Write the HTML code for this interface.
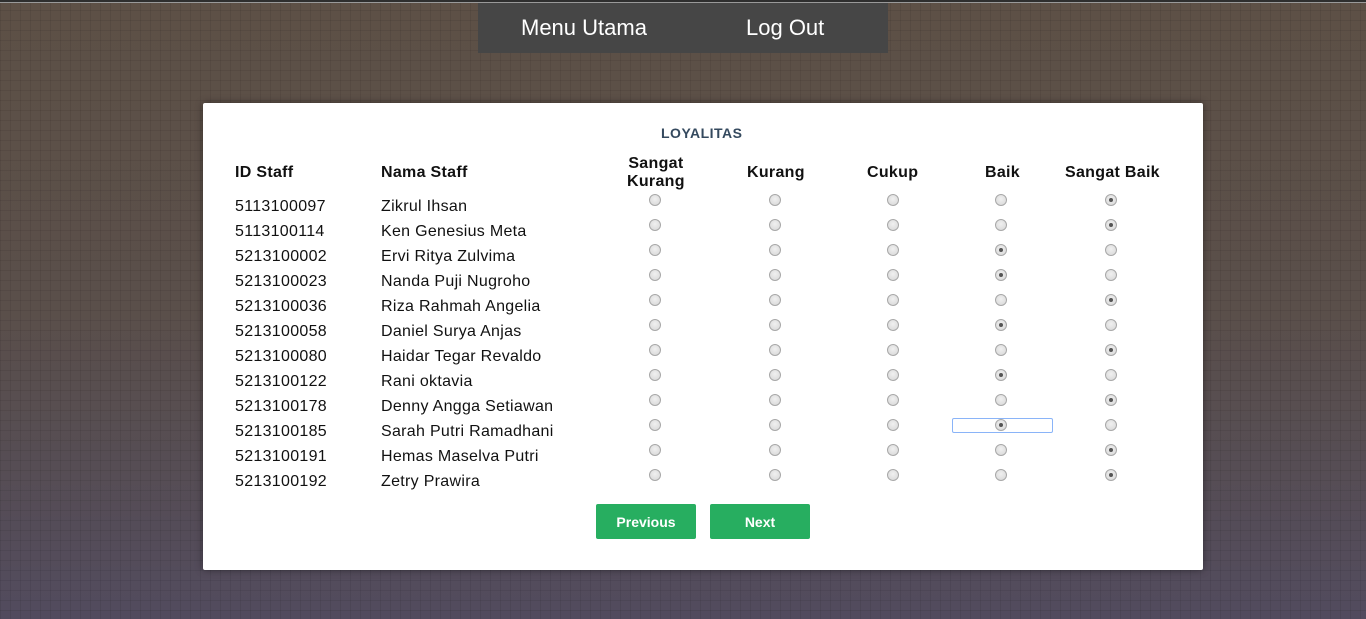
<!DOCTYPE html>
<html><head><meta charset="utf-8"><style>
*{margin:0;padding:0;box-sizing:border-box}
body{width:1366px;height:619px;overflow:hidden;position:relative;font-family:"Liberation Sans",sans-serif;
background:linear-gradient(#5d5046 0%,#5a4f4a 50%,#524b5e 100%);}
.grid{position:absolute;inset:0;background-image:linear-gradient(rgba(0,0,0,.07) 1px,transparent 1px),linear-gradient(90deg,rgba(0,0,0,.07) 1px,transparent 1px);background-size:10px 10px}
.topline{position:absolute;left:0;top:0;width:1366px;height:3px;background:#2e2e2e;border-bottom:1px solid #999}
.nav{position:absolute;left:478px;top:3px;width:410px;height:50px;background:#464646;color:#fff;font-size:22px}
.nav span{position:absolute;top:12px}
.card{position:absolute;left:203px;top:103px;width:1000px;height:467px;background:#fff;border-radius:2px;box-shadow:0 0 8px rgba(0,0,0,.4)}
.t{position:absolute;color:#111;font-size:16px;letter-spacing:.3px;white-space:nowrap}
.h{font-weight:bold}
.r{position:absolute;width:12px;height:12px;border-radius:50%;border:1px solid #a8a8a8;background:radial-gradient(circle at 50% 40%,#f0f0f0,#d6d6d6)}
.r.c::after{content:"";position:absolute;left:3px;top:3px;width:4px;height:4px;border-radius:50%;background:#555}
.btn{position:absolute;top:401px;width:100px;height:35px;background:#27ae60;color:#fff;font-weight:bold;font-size:14px;text-align:center;line-height:36px;border-radius:2px}
</style></head><body>
<div class="grid"></div>
<div class="topline"></div>
<div class="nav"><span style="left:43px">Menu Utama</span><span style="left:268px">Log Out</span></div>
<div class="card">
<div class="t" style="left:458px;top:22px;font-size:14px;color:#34495e;font-weight:bold;letter-spacing:.5px">LOYALITAS</div>
<div class="t h" style="left:32px;top:61px">ID Staff</div>
<div class="t h" style="left:178px;top:61px">Nama Staff</div>
<div class="t h" style="left:424px;top:52px;text-align:center;line-height:18px">Sangat<br>Kurang</div>
<div class="t h" style="left:544px;top:61px">Kurang</div>
<div class="t h" style="left:664px;top:61px">Cukup</div>
<div class="t h" style="left:782px;top:61px">Baik</div>
<div class="t h" style="left:862px;top:61px">Sangat Baik</div>

<div class="t" style="left:32px;top:95px">5113100097</div><div class="t" style="left:178px;top:95px">Zikrul Ihsan</div>
<div class="t" style="left:32px;top:120px">5113100114</div><div class="t" style="left:178px;top:120px">Ken Genesius Meta</div>
<div class="t" style="left:32px;top:145px">5213100002</div><div class="t" style="left:178px;top:145px">Ervi Ritya Zulvima</div>
<div class="t" style="left:32px;top:170px">5213100023</div><div class="t" style="left:178px;top:170px">Nanda Puji Nugroho</div>
<div class="t" style="left:32px;top:195px">5213100036</div><div class="t" style="left:178px;top:195px">Riza Rahmah Angelia</div>
<div class="t" style="left:32px;top:220px">5213100058</div><div class="t" style="left:178px;top:220px">Daniel Surya Anjas</div>
<div class="t" style="left:32px;top:245px">5213100080</div><div class="t" style="left:178px;top:245px">Haidar Tegar Revaldo</div>
<div class="t" style="left:32px;top:270px">5213100122</div><div class="t" style="left:178px;top:270px">Rani oktavia</div>
<div class="t" style="left:32px;top:295px">5213100178</div><div class="t" style="left:178px;top:295px">Denny Angga Setiawan</div>
<div class="t" style="left:32px;top:320px">5213100185</div><div class="t" style="left:178px;top:320px">Sarah Putri Ramadhani</div>
<div class="t" style="left:32px;top:345px">5213100191</div><div class="t" style="left:178px;top:345px">Hemas Maselva Putri</div>
<div class="t" style="left:32px;top:370px">5213100192</div><div class="t" style="left:178px;top:370px">Zetry Prawira</div>

<div style="position:absolute;left:749px;top:315px;width:101px;height:15px;border:1.5px solid #8ab4f8;border-radius:2px"></div>
<div id="radios"></div>
<div class="btn" style="left:393px">Previous</div>
<div class="btn" style="left:507px">Next</div>
</div>
<script>
var xs=[446,566,684,792,902],sel=[4,4,3,3,4,3,4,3,4,3,4,4],h='';
for(var i=0;i<12;i++)for(var j=0;j<5;j++)h+='<div class="r'+(sel[i]==j?' c':'')+'" style="left:'+xs[j]+'px;top:'+(91+25*i)+'px"></div>';
document.getElementById('radios').innerHTML=h;
</script>
</body></html>
